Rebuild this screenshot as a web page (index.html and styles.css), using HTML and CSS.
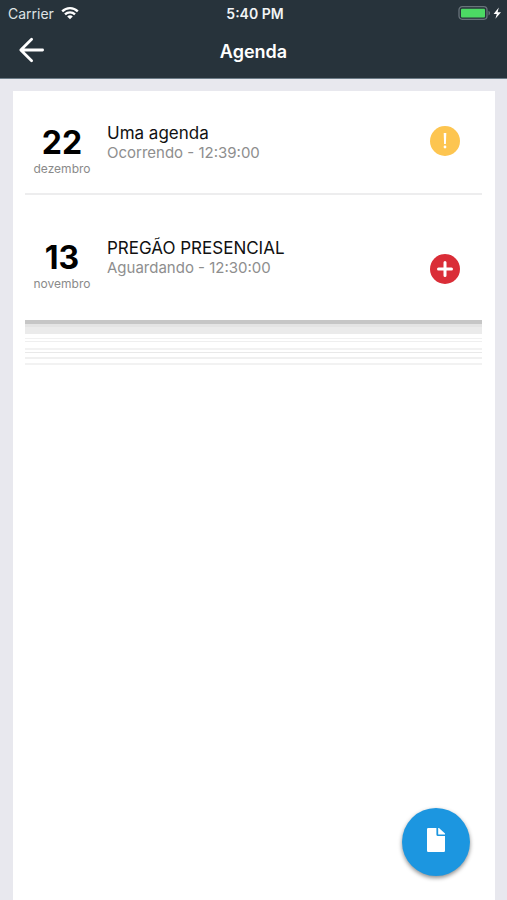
FILE: index.html
```html
<!DOCTYPE html>
<html lang="pt-BR">
<head>
<meta charset="utf-8">
<meta name="viewport" content="width=device-width, initial-scale=1">
<title>Agenda</title>
<link rel="stylesheet" href="styles.css">
</head>
<body>
<header class="header">
  <div class="status">
    <div class="carrier">
      <span>Carrier</span>
      <svg width="18" height="14" viewBox="0 0 18 14" fill="none" stroke="#fff" stroke-width="2.3" aria-hidden="true">
        <path d="M1.2 5.4C5.6 .9 12.4 .9 16.8 5.4"/>
        <path d="M4 8.4c2.8-2.8 7.2-2.8 10 0"/>
        <path d="M9 13.2 6.2 10.4c1.6-1.5 4-1.5 5.6 0Z" fill="#fff" stroke="none"/>
      </svg>
    </div>
    <time class="clock">5:40 PM</time>
    <svg class="battery" width="44" height="16" viewBox="0 0 44 16" aria-hidden="true">
      <rect x="1" y="1.7" width="28" height="12.6" rx="3.2" fill="none" stroke="#68737a" stroke-width="1.3"/>
      <rect x="3" y="3.7" width="24" height="8.8" rx="1" fill="#4cd964"/>
      <path d="M30.5 5.7c2 .8 2 3.9 0 4.7Z" fill="#68737a"/>
      <path d="M40.8 2.5 35.6 9h3.2l-1.4 4.8L43 7.2h-3.4Z" fill="#fff"/>
    </svg>
  </div>
  <nav class="bar">
    <button class="back" type="button" aria-label="Voltar">
      <svg width="26" height="26" viewBox="0 0 26 26" fill="none" stroke="#fff" stroke-width="2.8" stroke-linecap="round" stroke-linejoin="round" aria-hidden="true">
        <path d="M24.6 13H3M13.6 2.2 2.8 13l10.8 10.8"/>
      </svg>
    </button>
    <h1 class="title">Agenda</h1>
  </nav>
</header>
<main class="card">
  <ul class="list">
    <li class="item">
      <div class="date"><span class="day">22</span><span class="month">dezembro</span></div>
      <div class="info"><h2 class="name">Uma agenda</h2><p class="state">Ocorrendo - 12:39:00</p></div>
      <svg class="mark" width="30" height="30" viewBox="0 0 30 30" aria-hidden="true">
        <circle cx="15" cy="15" r="15" fill="#fdc550"/>
        <path d="M13.7 7h2.6l-.4 11h-1.8Z" fill="#fff"/>
        <circle cx="15" cy="21" r="1.4" fill="#fff"/>
      </svg>
    </li>
    <li class="item item-tall">
      <div class="date"><span class="day">13</span><span class="month">novembro</span></div>
      <div class="info"><h2 class="name">PREGÃO PRESENCIAL</h2><p class="state">Aguardando - 12:30:00</p></div>
      <svg class="mark" width="30" height="30" viewBox="0 0 30 30" aria-hidden="true">
        <circle cx="15" cy="15" r="15" fill="#da2d37"/>
        <path d="M15 8.5v13M8.5 15h13" stroke="#fff" stroke-width="3" stroke-linecap="round"/>
      </svg>
    </li>
  </ul>
  <div class="stack"></div>
</main>
<button class="fab" type="button" aria-label="Novo documento">
  <svg width="18" height="24" viewBox="0 0 18 24" fill="#fff" aria-hidden="true">
    <path d="M1.2 0H9.4V6.4Q9.4 8 11 8H18V22.8Q18 24 16.8 24H1.2Q0 24 0 22.8V1.2Q0 0 1.2 0Z"/>
    <path d="M11.2 0H12L18 5.6V6.4H11.2Z"/>
  </svg>
</button>
</body>
</html>
```
FILE: styles.css
```css
* {
  box-sizing: border-box;
}

body {
  display: flex;
  flex-direction: column;
  min-height: 100vh;
  margin: 0;
  background: #e8e8ee;
  color: #111;
  font-family: Inter, "Liberation Sans", sans-serif;
}

h1,
h2,
p,
ul {
  margin: 0;
  padding: 0;
  font-weight: 400;
}

button {
  display: flex;
  align-items: center;
  justify-content: center;
  padding: 0;
  border: 0;
  background: none;
}

.header {
  border-bottom: 1px solid #6c7c87;
  background: #27333b;
  color: #fff;
}

.status,
.bar {
  display: grid;
  grid-template-columns: 1fr auto 1fr;
  align-items: center;
}

.status {
  height: 26px;
  padding: 0 5px 0 8px;
  font-size: 14px;
}

.carrier {
  display: flex;
  align-items: center;
  gap: 7px;
  color: #dfe3e5;
}

.clock {
  font-weight: 600;
  color: #f2f4f5;
}

.battery {
  justify-self: end;
}

.bar {
  height: 52px;
  padding: 0 18px 4px;
}

.back {
  justify-self: start;
}

.title {
  padding-top: 3px;
  font-size: 18px;
  font-weight: 600;
}

.card {
  flex: 1;
  margin: 12px 12px 0 13px;
  padding: 0 13px 0 12px;
  background: #fff;
}

.list {
  list-style: none;
}

.item {
  display: flex;
  align-items: center;
  height: 104px;
  padding-right: 22px;
  border-bottom: 2px solid #ededee;
}

.item-tall {
  height: 125px;
  border-bottom: 0;
}

.date {
  display: flex;
  flex-direction: column;
  align-items: center;
  width: 74px;
  padding-top: 16px;
}

.day {
  font-size: 32px;
  font-weight: 700;
  line-height: 38px;
  color: #000;
}

.month {
  font-size: 12px;
  line-height: 14px;
  color: #8a8a8a;
}

.info {
  flex: 1;
  padding: 1px 0 0 8px;
}

.name {
  font-size: 17px;
  line-height: 20px;
}

.state {
  font-size: 15px;
  line-height: 20px;
  color: #8e8e8e;
}

.mark {
  margin-bottom: 2px;
}

.item-tall .date {
  padding-top: 14px;
}

.item-tall .mark {
  margin: 22px 0 0;
}

.stack {
  height: 46px;
  background: linear-gradient(
    #c6c6c6 4px,
    #e4e4e4 4px 7px,
    #ebebeb 7px 14px,
    #fff 14px 18px,
    #f1f1f1 18px 19px,
    #fff 19px 21px,
    #efefef 21px 22px,
    #fff 22px 28px,
    #f2f2f2 28px 30px,
    #fff 30px 32px,
    #e9e9e9 32px 33px,
    #fff 33px 37px,
    #f0f0f0 37px 39px,
    #fff 39px 43px,
    #f2f2f2 43px 45px,
    #fff 45px
  );
}

.fab {
  position: fixed;
  right: 37px;
  bottom: 24px;
  width: 68px;
  height: 68px;
  padding-bottom: 4px;
  border-radius: 50%;
  background: #1c96e0;
  box-shadow: 0 2px 4px rgba(0, 0, 0, 0.45);
}
```
